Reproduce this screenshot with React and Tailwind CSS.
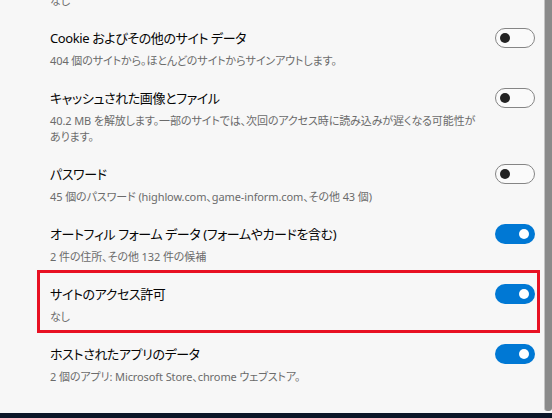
import React from 'react';

const rows = [
    {
        title: 'Cookie およびその他のサイト データ',
        desc: ['404 個のサイトから。ほとんどのサイトからサインアウトします。'],
        on: false,
    },
    {
        title: 'キャッシュされた画像とファイル',
        desc: ['40.2 MB を解放します。一部のサイトでは、次回のアクセス時に読み込みが遅くなる可能性が', 'あります。'],
        on: false,
    },
    {
        title: 'パスワード',
        desc: ['45 個のパスワード (highlow.com、game-inform.com、その他 43 個)'],
        on: false,
    },
    {
        title: 'オートフィル フォーム データ (フォームやカードを含む)',
        desc: ['2 件の住所、その他 132 件の候補'],
        on: true,
    },
    {
        title: 'サイトのアクセス許可',
        desc: ['なし'],
        on: true,
        marked: true,
    },
    {
        title: 'ホストされたアプリのデータ',
        desc: ['2 個のアプリ: Microsoft Store、chrome ウェブストア。'],
        on: true,
    },
];

function Toggle({ on }) {
    if (on) {
        return (
            <div className="w-[40px] h-[20px] shrink-0 rounded-full bg-[#0078d4] flex items-center justify-end pr-[6px]">
                <div className="w-[10px] h-[10px] rounded-full bg-white" />
            </div>
        );
    }
    return (
        <div className="w-[40px] h-[20px] shrink-0 rounded-full border border-[#858585] bg-[#fafafa] flex items-center pl-[4px]">
            <div className="w-[10px] h-[10px] rounded-full bg-[#222222]" />
        </div>
    );
}

function Row({ row }) {
    return (
        <div className="relative flex items-start justify-between pl-[50px] pr-[9px] pt-[9px] pb-[10px]">
            <div className="flex flex-col gap-[5px] whitespace-nowrap">
                <div className="text-[13px] leading-[20px] tracking-[-0.4px] text-[#050505]">{row.title}</div>
                <div className="text-[11px] leading-[16px] tracking-[-0.1px] text-[#6b6b6b]">
                    {row.desc.map((line, i) => (
                        <div key={i}>{line}</div>
                    ))}
                </div>
            </div>
            <Toggle on={row.on} />
            {row.marked && (
                <div className="absolute left-[37px] top-[-5px] w-[503px] h-[63px] border-[3px] border-[#e81123] pointer-events-none" />
            )}
        </div>
    );
}

export default function App() {
    return (
        <div className="w-[552px] h-[418px] bg-[#f7f7f7] flex flex-col overflow-hidden font-['Noto_Sans','Noto_Sans_CJK_JP',sans-serif] [font-feature-settings:'palt']">
            <div className="flex flex-1 min-h-0">
                <div className="flex-1 flex flex-col">
                    <div className="-mt-[7px] mb-[10px] pl-[50px] text-[11px] leading-[16px] text-[#6b6b6b]">なし</div>
                    {rows.map((row, i) => (
                        <Row key={i} row={row} />
                    ))}
                </div>
                <div className="w-[8px] pb-[2px] flex flex-col">
                    <div className="flex-1 bg-[#8a8a8a] border-l border-[#c4c4c4] rounded-b-[3px]" />
                </div>
            </div>
            <div className="h-[5px] bg-[#0b1628]" />
        </div>
    );
}
